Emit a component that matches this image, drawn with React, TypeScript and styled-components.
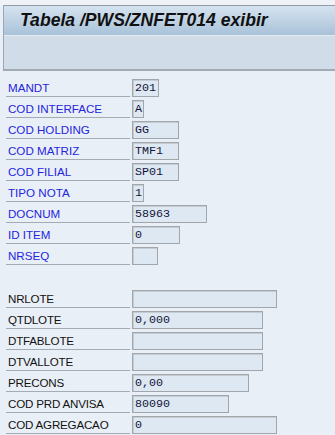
import React from "react";
import styled, { createGlobalStyle } from "styled-components";

const Global = createGlobalStyle`
  html, body { margin: 0; padding: 0; background: #e9eff6; }
  body { font-family: "Liberation Sans", Arial, sans-serif; }
`;

const Page = styled.div`
  width: 335px;
  height: 435px;
  overflow: hidden;
  background: #e9eff6;
  display: flex;
  flex-direction: column;
`;

const TopStrip = styled.div`
  height: 5px;
  background: #eff3f8;
`;

const HeaderPanel = styled.div`
  margin-left: 3px;
  border-left: 1px solid #9ba7b3;
  border-top: 1px solid #8f9cab;
  border-bottom: 2px solid #a2abb5;
  display: flex;
  flex-direction: column;
`;

const TitleBar = styled.div`
  height: 29px;
  background: linear-gradient(to bottom, #d5e3ef, #a9c2d9);
  border-bottom: 1px solid #e2eaf2;
  display: flex;
  align-items: center;
  padding-left: 16px;
`;

const Title = styled.h1`
  margin: 0;
  font-family: "Liberation Sans", Arial, sans-serif;
  font-weight: bold;
  font-style: italic;
  font-size: 17.6px;
  color: #111;
  line-height: 1;
  margin-top: 1px;
`;

const Toolbar = styled.div`
  height: 33px;
  background: #d0dde9;
`;

const Content = styled.div`
  padding-top: 5px;
  display: flex;
  flex-direction: column;
`;

const Row = styled.div`
  height: 21px;
  display: flex;
  align-items: flex-end;
`;

const Spacer = styled.div`
  height: 22px;
`;

const Label = styled.div<{ $key?: boolean }>`
  margin-left: 6px;
  width: 122px;
  height: 18px;
  padding: 2px 0 0 2px;
  border-bottom: 1px solid #a3abb3;
  font-size: 11.6px;
  line-height: 20px;
  color: ${(p) => (p.$key ? "#2424e0" : "#111")};
  letter-spacing: ${(p) => (p.$key ? "0" : "-0.2px")};
  white-space: nowrap;
`;

const Field = styled.div<{ $w: number }>`
  margin-left: 2px;
  width: ${(p) => p.$w}px;
  height: 18px;
  box-sizing: border-box;
  background: #dde8f3;
  border: 1px solid #a2a6aa;
  box-shadow: inset 1px 1px 0 #c4ccd4;
  font-family: "Liberation Mono", "Courier New", monospace;
  font-size: 11.7px;
  line-height: 17px;
  padding-left: 2px;
  color: #14143a;
  white-space: nowrap;
  overflow: hidden;
`;

type F = { label: string; value: string; w: number };

const upper: F[] = [
  { label: "MANDT", value: "201", w: 27 },
  { label: "COD INTERFACE", value: "A", w: 12 },
  { label: "COD HOLDING", value: "GG", w: 47 },
  { label: "COD MATRIZ", value: "TMF1", w: 47 },
  { label: "COD FILIAL", value: "SP01", w: 47 },
  { label: "TIPO NOTA", value: "1", w: 12 },
  { label: "DOCNUM", value: "58963", w: 75 },
  { label: "ID ITEM", value: "0", w: 48 },
  { label: "NRSEQ", value: "", w: 26 },
];

const lower: F[] = [
  { label: "NRLOTE", value: "", w: 145 },
  { label: "QTDLOTE", value: "0,000", w: 131 },
  { label: "DTFABLOTE", value: "", w: 131 },
  { label: "DTVALLOTE", value: "", w: 131 },
  { label: "PRECONS", value: "0,00", w: 117 },
  { label: "COD PRD ANVISA", value: "80090", w: 97 },
  { label: "COD AGREGACAO", value: "0", w: 145 },
];

export default function App() {
  return (
    <Page>
      <Global />
      <TopStrip />
      <HeaderPanel>
        <TitleBar>
          <Title>Tabela /PWS/ZNFET014 exibir</Title>
        </TitleBar>
        <Toolbar />
      </HeaderPanel>
      <Content>
        {upper.map((f) => (
          <Row key={f.label}>
            <Label $key>{f.label}</Label>
            <Field $w={f.w}>{f.value}</Field>
          </Row>
        ))}
        <Spacer />
        {lower.map((f) => (
          <Row key={f.label}>
            <Label>{f.label}</Label>
            <Field $w={f.w}>{f.value}</Field>
          </Row>
        ))}
      </Content>
    </Page>
  );
}
